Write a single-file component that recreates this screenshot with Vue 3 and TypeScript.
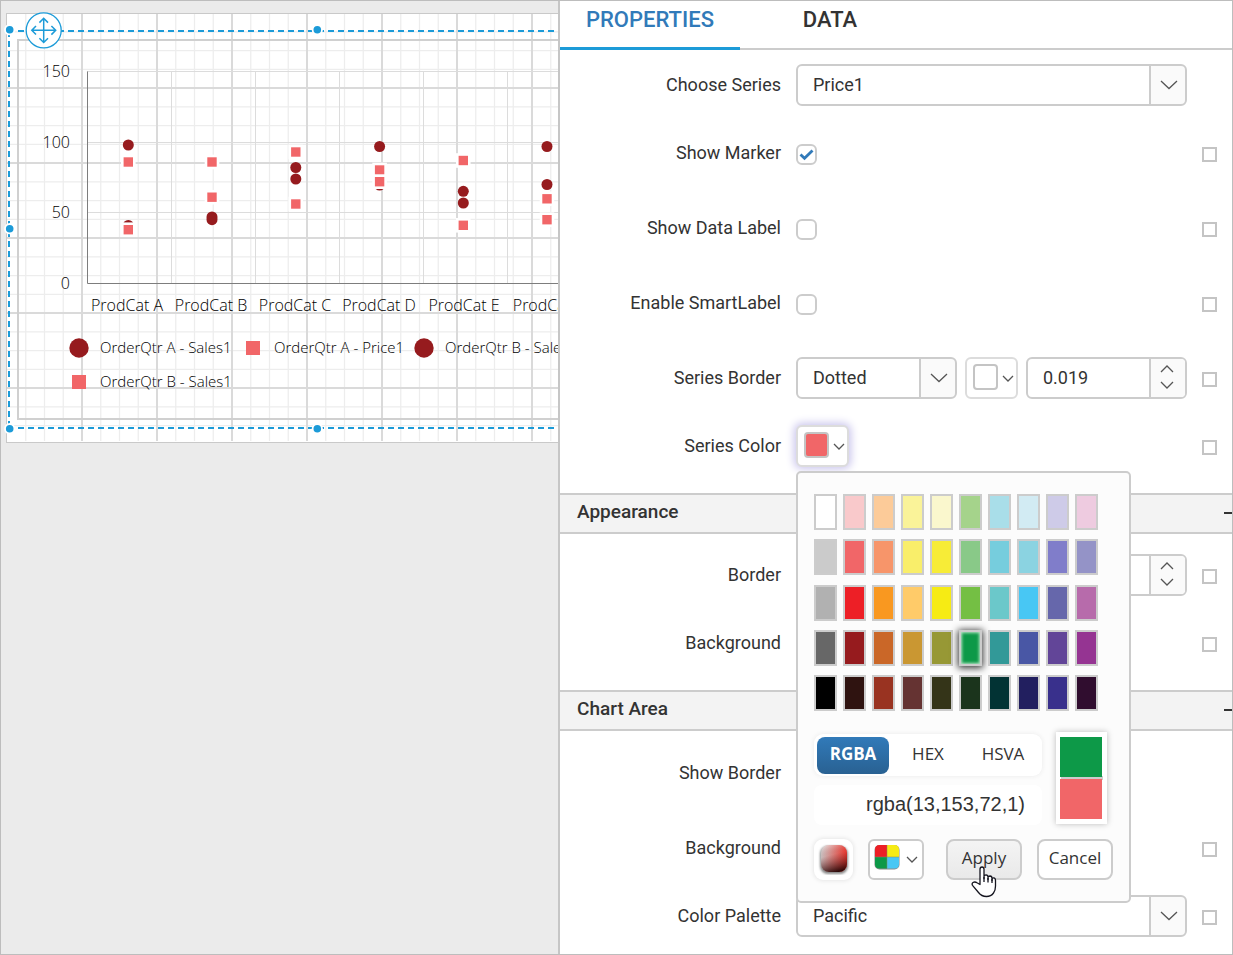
<script setup lang="ts">
import { ref } from 'vue'

interface Marker {
  x: number
  circles: number[]
  squares: number[]
}

const minorX: number[] = []
const majorX: number[] = []
for (let i = 1; i < 60; i++) (i % 4 === 0 ? majorX : minorX).push(7 + i * 18.75)
const minorY: number[] = []
const majorY: number[] = []
for (let i = 1; i < 23; i++) (i % 4 === 0 ? majorY : minorY).push(13 + i * 18.75)

const columnLines = [171.5, 255.5, 339.5, 423.5, 507.5]
const valueLines = [71.5, 142.5, 212.5]
const valueLabels = [
  { text: '150', y: 77 },
  { text: '100', y: 148 },
  { text: '50', y: 218 },
  { text: '0', y: 289 },
]
const categories = [
  { text: 'ProdCat A', x: 127 },
  { text: 'ProdCat B', x: 211 },
  { text: 'ProdCat C', x: 295 },
  { text: 'ProdCat D', x: 379 },
  { text: 'ProdCat E', x: 464 },
  { text: 'ProdCat F', x: 548 },
]
const markers: Marker[] = [
  { x: 128.3, circles: [145, 225.5], squares: [162, 229.7] },
  { x: 212, circles: [217, 219.7], squares: [162, 197.2] },
  { x: 295.8, circles: [167.5, 179], squares: [152, 204] },
  { x: 379.6, circles: [146.5, 185], squares: [170, 181.7] },
  { x: 463.3, circles: [191.3, 203], squares: [160.5, 225.3] },
  { x: 547, circles: [146.5, 184.5], squares: [198.8, 219.7] },
]
const legend = [
  { text: 'OrderQtr A - Sales1', x: 79, y: 348, tx: 100, round: true },
  { text: 'OrderQtr A - Price1', x: 253, y: 348, tx: 274, round: false },
  { text: 'OrderQtr B - Sales1', x: 424, y: 348, tx: 445, round: true },
  { text: 'OrderQtr B - Sales1', x: 79, y: 382, tx: 100, round: false },
]
const handles = [
  [9.7, 29.7], [317.3, 29.7], [9.7, 228.7], [9.7, 428.7], [317.3, 428.7],
]

const palette = [
  '#ffffff', '#f9c9cb', '#fccb99', '#faf399', '#faf7cd', '#a5d38b', '#a9dee9', '#d2ebf3', '#cecbe8', '#eecbe0',
  '#cbcbcb', '#f16668', '#f7956a', '#f9ee6a', '#f7ec37', '#89c988', '#76cddd', '#8bd3e1', '#807dca', '#9493c7',
  '#b1b1b1', '#ed1f26', '#f99820', '#ffcb69', '#f6eb14', '#74bf44', '#6bc8ca', '#48c7f4', '#6667ab', '#b76bab',
  '#676767', '#961b1e', '#ca6728', '#ca9732', '#979835', '#0d9948', '#329998', '#4957a5', '#624598', '#953492',
  '#000000', '#2f1310', '#993321', '#653332', '#343418', '#1b341c', '#023334', '#221f5f', '#39308c', '#300d2f',
]

const modes = ['RGBA', 'HEX', 'HSVA']
const mode = ref('RGBA')
const current = ref('#0d9948')
const previous = '#f16668'
const colorText = ref('rgba(13,153,72,1)')
const series = ref('Price1')
const borderStyle = ref('Dotted')
const borderWidth = ref('0.019')
const areaWidth = ref('')
const chartPalette = ref('Pacific')
const showMarker = ref(true)
const showLabel = ref(false)
const smartLabel = ref(false)
const showBorder = ref(false)
</script>

<template>
  <div class="designer">
    <section class="canvas" aria-label="Report canvas">
      <svg class="surface" width="100%" height="444">
        <g transform="translate(-1 -1)">
          <rect x="6.5" y="13.5" width="2000" height="429" fill="#fff" stroke="#c9c9c9" />
          <g stroke="#ededed" stroke-width="1.25">
            <line v-for="x in minorX" :key="x" :x1="x" :x2="x" y1="14" y2="441" />
            <line v-for="y in minorY" :key="y" x1="7" x2="2000" :y1="y" :y2="y" />
          </g>
          <g stroke="#dadada" stroke-width="2">
            <line v-for="x in majorX" :key="x" :x1="x" :x2="x" y1="14" y2="441" />
            <line v-for="y in majorY" :key="y" x1="7" x2="2000" :y1="y" :y2="y" />
          </g>
          <rect x="18" y="40" width="2000" height="379" fill="none" stroke="#d0d0d0" stroke-width="2" />
          <g stroke="#dcdcdc">
            <line v-for="x in columnLines" :key="x" :x1="x" :x2="x" y1="72" y2="283" />
            <line v-for="y in valueLines" :key="y" x1="87" x2="2000" :y1="y" :y2="y" />
          </g>
          <path d="M87.5 71.5V283.5H2000" fill="none" stroke="#7d7d7d" />
          <g v-for="m in markers" :key="m.x">
            <circle v-for="y in m.circles" :key="y" :cx="m.x" :cy="y" r="5.5" fill="#961b1e" />
            <rect
              v-for="y in m.squares" :key="y" :x="m.x - 6" :y="y - 6" width="12" height="12"
              fill="#f16668" stroke="#fff" stroke-width="2.6"
            />
          </g>
          <g class="axis-text">
            <text v-for="l in valueLabels" :key="l.text" x="70" :y="l.y" text-anchor="end">{{ l.text }}</text>
            <text v-for="c in categories" :key="c.text" :x="c.x" y="311" text-anchor="middle">{{ c.text }}</text>
          </g>
          <g v-for="(l, i) in legend" :key="i" class="legend-text">
            <circle v-if="l.round" :cx="l.x" :cy="l.y" r="9.7" fill="#961b1e" />
            <rect v-else :x="l.x - 7" :y="l.y - 7" width="14" height="14" fill="#f16668" />
            <text :x="l.tx" :y="l.y + 5">{{ l.text }}</text>
          </g>
          <g stroke="#1c9bd8" stroke-width="2" stroke-dasharray="6 4" fill="none">
            <path d="M18 31H2000" />
            <path d="M18 428H2000" />
            <path d="M9 31V428" />
          </g>
          <circle
            v-for="(h, i) in handles" :key="i" :cx="h[0]" :cy="h[1]" r="4.7"
            fill="#1c9bd8" stroke="#fff" stroke-width="1.8"
          />
          <circle cx="43.7" cy="30.3" r="17.5" fill="#fff" stroke="#1c9bd8" stroke-width="1.3" />
          <path
            d="M43.7 18.5V42.5M32 30.3H55.5M39.4 22.6L43.7 18.3L48 22.6M39.4 38.2L43.7 42.5L48 38.2M36 26L31.8 30.3L36 34.6M51.4 26L55.7 30.3L51.4 34.6"
            fill="none" stroke="#1c9bd8" stroke-width="1.5"
          />
        </g>
      </svg>
    </section>

    <section class="inspector" aria-label="Item settings">
      <nav class="tabs">
        <button type="button" class="tab active">PROPERTIES</button>
        <button type="button" class="tab">DATA</button>
      </nav>

      <div class="group first">
        <div class="row">
          <label for="series">Choose Series</label>
          <div class="control">
            <div class="combo">
              <select id="series" v-model="series"><option>Price1</option></select>
              <svg class="combo-arrow" width="18" height="10" viewBox="0 0 18 10"><path d="M1 1L9 8.5L17 1" /></svg>
            </div>
          </div>
        </div>
        <div class="row toggle">
          <label for="marker">Show Marker</label>
          <div class="control"><input id="marker" v-model="showMarker" type="checkbox" class="check" /></div>
          <button type="button" class="advanced" aria-label="Marker expression"></button>
        </div>
        <div class="row toggle">
          <label for="datalabel">Show Data Label</label>
          <div class="control"><input id="datalabel" v-model="showLabel" type="checkbox" class="check" /></div>
          <button type="button" class="advanced" aria-label="Data label expression"></button>
        </div>
        <div class="row toggle">
          <label for="smart">Enable SmartLabel</label>
          <div class="control"><input id="smart" v-model="smartLabel" type="checkbox" class="check" /></div>
          <button type="button" class="advanced" aria-label="Smart label expression"></button>
        </div>
        <div class="row">
          <label for="border-style">Series Border</label>
          <div class="control">
            <div class="combo">
              <select id="border-style" v-model="borderStyle"><option>Dotted</option></select>
              <svg class="combo-arrow" width="18" height="10" viewBox="0 0 18 10"><path d="M1 1L9 8.5L17 1" /></svg>
            </div>
            <button type="button" class="color" aria-label="Border color">
              <span class="chip"></span>
              <svg width="12" height="8" viewBox="0 0 12 8"><path d="M1 1L6 6L11 1" /></svg>
            </button>
            <div class="number">
              <input v-model="borderWidth" type="text" aria-label="Border width" />
              <div class="spin">
                <button type="button" aria-label="Increase"><svg width="14" height="8" viewBox="0 0 14 8"><path d="M1 7L7 1L13 7" /></svg></button>
                <button type="button" aria-label="Decrease"><svg width="14" height="8" viewBox="0 0 14 8"><path d="M1 1L7 7L13 1" /></svg></button>
              </div>
            </div>
          </div>
          <button type="button" class="advanced" aria-label="Border expression"></button>
        </div>
        <div class="row">
          <label for="series-color">Series Color</label>
          <div class="control anchor">
            <button id="series-color" type="button" class="color focused">
              <span class="chip red"></span>
              <svg width="12" height="8" viewBox="0 0 12 8"><path d="M1 1L6 6L11 1" /></svg>
            </button>

            <div class="picker" role="dialog" aria-label="Color picker">
              <div class="swatches">
                <button
                  v-for="c in palette" :key="c" type="button" class="swatch" :class="{ picked: c === current }"
                  :style="{ backgroundColor: c }" :aria-label="c" @click="current = c"
                ></button>
              </div>
              <div class="values">
                <div class="value-column">
                  <div class="modes">
                    <button
                      v-for="m in modes" :key="m" type="button" class="mode" :class="{ on: m === mode }"
                      @click="mode = m"
                    >{{ m }}</button>
                  </div>
                  <input v-model="colorText" class="value" type="text" aria-label="Color value" />
                </div>
                <div class="preview">
                  <div class="sample" :style="{ backgroundColor: current }"></div>
                  <div class="sample" :style="{ backgroundColor: previous }"></div>
                </div>
              </div>
              <div class="actions">
                <button type="button" class="gradient" aria-label="Gradient picker">
                  <svg width="32" height="32" viewBox="0 0 32 32">
                    <defs>
                      <linearGradient id="hue" x1="0" x2="1" y1="0" y2="0">
                        <stop offset="0" stop-color="#cfcfcf" />
                        <stop offset="1" stop-color="#f4382f" />
                      </linearGradient>
                      <linearGradient id="shade" x1="0.35" x2="0.6" y1="0" y2="1">
                        <stop offset="0" stop-color="#fff" stop-opacity="0.3" />
                        <stop offset="0.35" stop-color="#802020" stop-opacity="0.1" />
                        <stop offset="1" stop-color="#180000" stop-opacity="0.9" />
                      </linearGradient>
                      <filter id="soft" x="-20%" y="-20%" width="140%" height="140%"><feGaussianBlur stdDeviation="1" /></filter>
                    </defs>
                    <rect x="2" y="3" width="28" height="28" rx="8" fill="#888" filter="url(#soft)" />
                    <rect x="3" y="2" width="26" height="27" rx="8" fill="url(#hue)" />
                    <rect x="3" y="2" width="26" height="27" rx="8" fill="url(#shade)" />
                  </svg>
                </button>
                <button type="button" class="presets" aria-label="Palette presets">
                  <svg class="quad" width="26" height="26" viewBox="0 0 26 26">
                    <rect x="0.5" y="1" width="25" height="24.5" rx="5" fill="#8a8a8a" />
                    <path d="M5.5 1H13V13H1V5.5Q1 1 5.5 1Z" fill="#ed1f26" />
                    <path d="M13 1H20.5Q25 1 25 5.5V13H13Z" fill="#f6eb14" />
                    <path d="M1 13H13V24.5H5.5Q1 24.5 1 20Z" fill="#0d9948" />
                    <path d="M13 13H25V20Q25 24.5 20.5 24.5H13Z" fill="#48c7f4" />
                    <path d="M13 1V24.5M1 13H25" stroke="#8a8a6a" stroke-opacity="0.5" fill="none" />
                  </svg>
                  <svg width="12" height="8" viewBox="0 0 12 8"><path d="M1 1L6 6L11 1" /></svg>
                </button>
                <button type="button" class="action apply">
                  Apply
                  <svg class="pointer" width="26" height="34" viewBox="0 0 26 34">
                    <path
                      d="M9 19.5V4.2Q9 2 11 2Q13 2 13 4.2V13.5V11.3Q13.2 9.8 15 9.8Q17 9.9 17 12V14.5V12.3Q17.3 11 19 11Q21 11.1 21 13.5V15.5V14Q21.3 12.8 22.7 12.9Q24.5 13 24.5 15.5V21Q24.5 25.5 22.5 28Q20 31.5 15.5 31.5Q10.5 31.5 7.5 27.5L1.5 20.3Q0.5 18.6 2 17.5Q4 16.4 6 17.8Z"
                      fill="#fff" stroke="#15151f" stroke-width="1.3" stroke-linejoin="round"
                    />
                    <path d="M13 12V17M17 13V17.5M21 14V18" fill="none" stroke="#15151f" stroke-width="1.3" />
                  </svg>
                </button>
                <button type="button" class="action">Cancel</button>
              </div>
            </div>
          </div>
          <button type="button" class="advanced" aria-label="Color expression"></button>
        </div>
      </div>

      <h2 class="heading">Appearance<span class="collapse"></span></h2>
      <div class="group">
        <div class="row">
          <label for="area-width">Border</label>
          <div class="control end">
            <div class="number">
              <input id="area-width" v-model="areaWidth" type="text" />
              <div class="spin">
                <button type="button" aria-label="Increase"><svg width="14" height="8" viewBox="0 0 14 8"><path d="M1 7L7 1L13 7" /></svg></button>
                <button type="button" aria-label="Decrease"><svg width="14" height="8" viewBox="0 0 14 8"><path d="M1 1L7 7L13 1" /></svg></button>
              </div>
            </div>
          </div>
          <button type="button" class="advanced" aria-label="Border expression"></button>
        </div>
        <div class="row">
          <label for="background">Background</label>
          <div class="control">
            <button id="background" type="button" class="color">
              <span class="chip"></span>
              <svg width="12" height="8" viewBox="0 0 12 8"><path d="M1 1L6 6L11 1" /></svg>
            </button>
          </div>
          <button type="button" class="advanced" aria-label="Background expression"></button>
        </div>
      </div>

      <h2 class="heading">Chart Area<span class="collapse"></span></h2>
      <div class="group last">
        <div class="row toggle">
          <label for="show-border">Show Border</label>
          <div class="control"><input id="show-border" v-model="showBorder" type="checkbox" class="check" /></div>
        </div>
        <div class="row">
          <label for="area-background">Background</label>
          <div class="control">
            <button id="area-background" type="button" class="color">
              <span class="chip"></span>
              <svg width="12" height="8" viewBox="0 0 12 8"><path d="M1 1L6 6L11 1" /></svg>
            </button>
          </div>
          <button type="button" class="advanced" aria-label="Background expression"></button>
        </div>
        <div class="row">
          <label for="chart-palette">Color Palette</label>
          <div class="control">
            <div class="combo">
              <select id="chart-palette" v-model="chartPalette"><option>Pacific</option></select>
              <svg class="combo-arrow" width="18" height="10" viewBox="0 0 18 10"><path d="M1 1L9 8.5L17 1" /></svg>
            </div>
          </div>
          <button type="button" class="advanced" aria-label="Palette expression"></button>
        </div>
      </div>
    </section>
  </div>
</template>

<style>
body {
  margin: 0;
  background: #fff;
}
</style>

<style scoped>
* {
  box-sizing: border-box;
}
button,
input,
select {
  margin: 0;
  padding: 0;
  font: inherit;
  color: inherit;
  background: none;
  border: 0;
  outline: 0;
}
.designer {
  display: grid;
  grid-template-columns: minmax(0, 1fr) 674px;
  min-height: 100vh;
  border: 1px solid #bdbdbd;
  font-family: Roboto, "Liberation Sans", sans-serif;
  font-size: 18px;
  color: #333;
}
.canvas {
  background: #ebebeb;
  overflow: hidden;
}
.surface {
  display: block;
}
.axis-text,
.legend-text {
  font-family: "Open Sans", "Noto Sans", sans-serif;
  font-weight: 300;
  fill: #000;
}
.axis-text {
  font-size: 16px;
}
.legend-text {
  font-size: 15px;
}
.inspector {
  border-left: 2px solid #c6c6c6;
  background: #fff;
}
.tabs {
  display: flex;
  height: 49px;
  border-bottom: 2px solid #ccc;
}
.tab {
  width: 180px;
  height: 49px;
  padding-bottom: 10px;
  border-bottom: 3px solid transparent;
  font-size: 22px;
  font-weight: 500;
  text-align: center;
}
.tab.active {
  color: #317ab9;
  border-bottom-color: #1c9bd8;
}
.group {
  padding: 20px 15px 0 0;
}
.group.first {
  padding-top: 14px;
}
.group.last {
  padding-top: 21px;
}
.row {
  display: grid;
  grid-template-columns: 221px minmax(0, 1fr) 15px;
  column-gap: 15px;
  align-items: center;
  height: 42px;
  margin-bottom: 26px;
}
.row.toggle {
  margin-bottom: 33px;
}
.group.last .row:last-child {
  margin-bottom: 16px;
}
.row label {
  text-align: right;
  line-height: 42px;
}
.control {
  display: flex;
  align-items: center;
  justify-content: space-between;
  gap: 8px;
}
.control.end {
  justify-content: flex-end;
}
.anchor {
  position: relative;
}
.combo {
  position: relative;
  flex: 1;
  min-width: 0;
  height: 42px;
  border: 2px solid #ccc;
  border-radius: 6px;
  overflow: hidden;
  background: linear-gradient(to left, #fafafa 34px, #ccc 34px, #ccc 36px, #fff 36px);
}
.combo select {
  appearance: none;
  width: 100%;
  height: 38px;
  padding: 0 40px 2px 15px;
}
.combo-arrow {
  position: absolute;
  right: 7px;
  top: 14px;
  pointer-events: none;
}
.combo-arrow path,
.color path,
.spin path,
.presets > svg:last-child path {
  fill: none;
  stroke: #555;
  stroke-width: 1.3;
}
.check {
  appearance: none;
  width: 21px;
  height: 21px;
  margin-top: 3px;
  border: 2px solid #ccc;
  border-radius: 6px;
  background: #fff;
}
.check:checked {
  background: #fff url("data:image/svg+xml,%3Csvg xmlns='http://www.w3.org/2000/svg' viewBox='0 0 17 17'%3E%3Cpath d='M2.5 8.5L6.5 12.3L14.5 4.5' fill='none' stroke='%23317ab9' stroke-width='2.8'/%3E%3C/svg%3E") center / 17px 17px no-repeat;
}
.advanced {
  width: 15px;
  height: 15px;
  margin-top: 3px;
  border: 2px solid #c4c4c4;
}
.color {
  display: flex;
  align-items: center;
  justify-content: space-between;
  width: 53px;
  height: 42px;
  padding: 0 2px 2px 6px;
  border: 2px solid #dcdcdc;
  border-radius: 6px;
  background: #fff;
}
.color svg {
  margin-top: 3px;
}
.color.focused {
  box-shadow: 0 0 9px 2px #c9c4ec;
}
.chip {
  width: 25px;
  height: 26px;
  border: 2px solid #c4c4c4;
  border-radius: 4px;
}
.chip.red {
  background: #f16668;
}
.number {
  display: flex;
  width: 161px;
  height: 42px;
  border: 2px solid #ccc;
  border-radius: 6px;
  overflow: hidden;
}
.number input {
  flex: 1;
  min-width: 0;
  padding: 0 0 2px 15px;
}
.spin {
  display: flex;
  flex-direction: column;
  justify-content: center;
  gap: 8px;
  width: 36px;
  padding: 0 2px 2px 0;
  border-left: 2px solid #ccc;
  background: #fafafa;
}
.spin button {
  display: flex;
  justify-content: center;
}
.heading {
  display: flex;
  align-items: center;
  justify-content: space-between;
  height: 41px;
  margin: 0;
  padding-left: 17px;
  padding-bottom: 4px;
  border: solid #ccc;
  border-width: 2px 0;
  background: #f3f3f3;
  font-size: 19px;
  font-weight: 500;
}
.collapse {
  width: 8px;
  height: 2px;
  margin-top: 3px;
  background: #333;
}
.picker {
  position: absolute;
  z-index: 2;
  top: 46px;
  left: 0;
  width: 335px;
  padding: 21px 16px;
  border: 2px solid #ccc;
  border-radius: 5px;
  background: #fcfcfc;
  font-family: "Open Sans", "Noto Sans", sans-serif;
  font-size: 17px;
}
.swatches {
  display: grid;
  grid-template-columns: repeat(10, 23px);
  justify-content: space-between;
  align-content: space-between;
  width: 284px;
  height: 217px;
}
.swatch {
  height: 36px;
  border: 2px solid #ccc;
}
.swatch.picked {
  box-shadow: 0 1px 7px 1px #333, inset 0 0 3px 1px #b9e4c6;
}
.values {
  display: flex;
  align-items: flex-start;
  gap: 14px;
  margin-top: 21px;
}
.value-column {
  display: flex;
  flex-direction: column;
  gap: 9px;
  width: 228px;
  padding-top: 2px;
}
.modes {
  display: flex;
  height: 42px;
  padding: 3px 3px 2px;
  border-radius: 9px;
  background: #fff;
  box-shadow: 0 0 5px #eaeaea;
}
.mode {
  width: 72px;
  padding-bottom: 5px;
  border-radius: 8px;
}
.mode:nth-child(2) {
  flex: 1;
}
.mode.on {
  background: linear-gradient(#317ab9, #296192);
  color: #fff;
  font-weight: 700;
}
.value {
  width: 228px;
  height: 40px;
  padding: 0 17px 2px 0;
  border-radius: 8px;
  background: #fff;
  font-family: "Liberation Sans", sans-serif;
  font-size: 20px;
  text-align: right;
}
.preview {
  display: flex;
  flex-direction: column;
  gap: 2px;
  width: 51px;
  padding: 5px 5px 5px 4px;
  background: linear-gradient(#ccc, #ccc) center / 42px 4px no-repeat #fff;
  box-shadow: 0 0 6px #bbb;
}
.sample {
  height: 40px;
}
.actions {
  display: flex;
  gap: 15px;
  margin-top: 14px;
}
.gradient {
  display: flex;
  align-items: center;
  justify-content: center;
  width: 39px;
  height: 41px;
  padding-bottom: 2px;
  border-radius: 9px;
  background: #fff;
  box-shadow: 0 0 5px #ddd;
}
.presets {
  display: flex;
  align-items: center;
  justify-content: space-between;
  width: 56px;
  height: 41px;
  margin-right: 7px;
  padding: 0 4px;
  border: 2px solid #ccc;
  border-radius: 6px;
  background: #fff;
}
.quad {
  margin-bottom: 5px;
}
.action {
  position: relative;
  width: 76px;
  height: 41px;
  padding-bottom: 4px;
  border: 2px solid #ccc;
  border-radius: 8px;
  background: #fff;
}
.apply {
  background: linear-gradient(#f4f4f4, #e9e9e9);
}
.pointer {
  position: absolute;
  left: 23px;
  top: 24px;
}
</style>
